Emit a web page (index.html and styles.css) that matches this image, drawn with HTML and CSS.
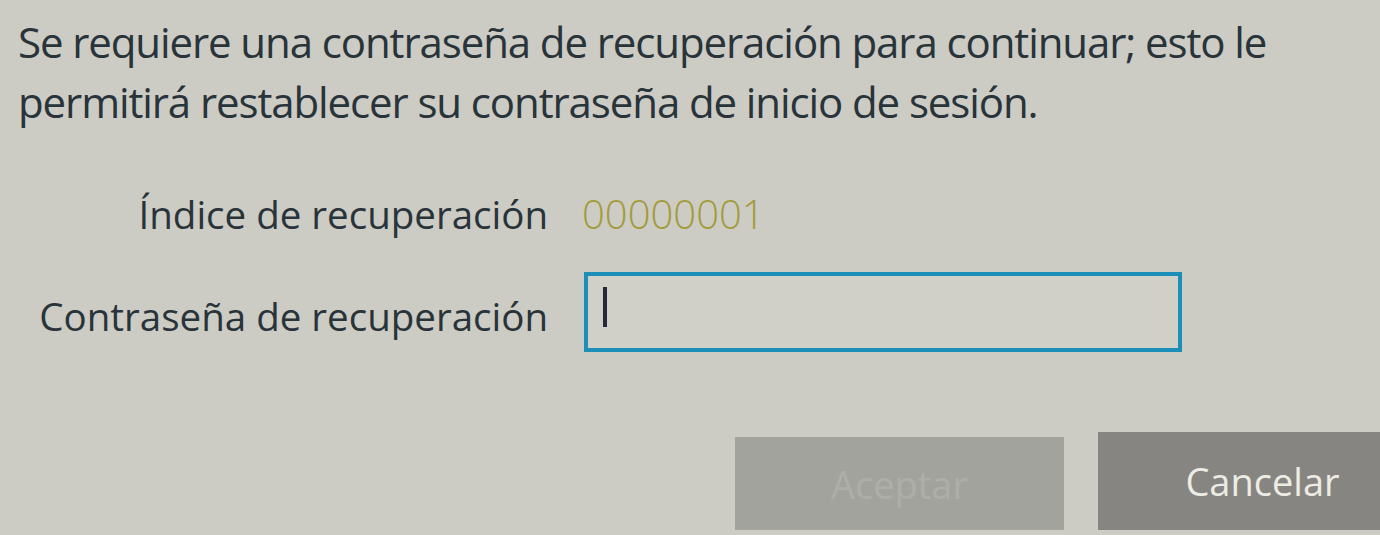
FILE: index.html
```html
<!DOCTYPE html>
<html lang="es">
<head>
<meta charset="utf-8">
<title>Contraseña de recuperación</title>
<link rel="stylesheet" href="styles.css">
</head>
<body>
<div class="dialog">
  <p class="message">Se requiere una contraseña de recuperación para continuar; esto le<br>permitirá restablecer su contraseña de inicio de sesión.</p>
  <div class="form">
    <div class="label label-index">Índice de recuperación</div>
    <div class="value">00000001</div>
    <div class="label label-pass">Contraseña de recuperación</div>
    <div class="field"><span class="caret"></span></div>
  </div>
  <div class="actions">
    <div class="btn btn-ok">Aceptar</div>
    <div class="btn btn-cancel">Cancelar</div>
  </div>
</div>
</body>
</html>
```

FILE: styles.css
```css
html, body {
  margin: 0;
  padding: 0;
  background: #cccbc4;
  overflow: hidden;
}
body {
  width: 1380px;
  height: 535px;
  font-family: "Open Sans", "Noto Sans", sans-serif;
  color: #28343a;
}
.dialog {
  padding: 12px 0 0 18px;
  display: flex;
  flex-direction: column;
}
.message {
  margin: 0;
  font-size: 42px;
  letter-spacing: -1.1px;
  line-height: 60px;
  white-space: nowrap;
}
.form {
  margin-top: 57px;
  display: grid;
  grid-template-columns: 530px 600px;
  column-gap: 34px;
  align-items: start;
}
.label {
  font-size: 38.5px;
  text-align: right;
  justify-self: end;
}
.label-index {
  height: 58px;
  line-height: 50px;
}
.label-pass {
  line-height: 50px;
  padding-top: 44px;
}
.value {
  font-size: 40px;
  line-height: 50px;
  height: 58px;
  color: #a39b3a;
  font-weight: 300;
}
.field {
  margin-top: 25px;
  margin-left: 2px;
  width: 575px;
  height: 61px;
  border: 4px solid #1b8fb7;
  background: #d0d0c9;
  display: flex;
  align-items: flex-start;
  padding: 11px 0 0 15px;
}
.caret {
  width: 4px;
  height: 40px;
  background: #262a38;
}
.actions {
  margin-top: 80px;
  padding-left: 717px;
  display: flex;
  align-items: flex-end;
  gap: 34px;
}
.btn {
  flex: none;
  width: 329px;
  display: flex;
  align-items: center;
  justify-content: center;
  font-size: 38px;
}
.btn-ok {
  height: 93px;
  background: #a3a39d;
  color: #aeaea8;
}
.btn-cancel {
  height: 98px;
  background: #878581;
  color: #ecece4;
}
```
